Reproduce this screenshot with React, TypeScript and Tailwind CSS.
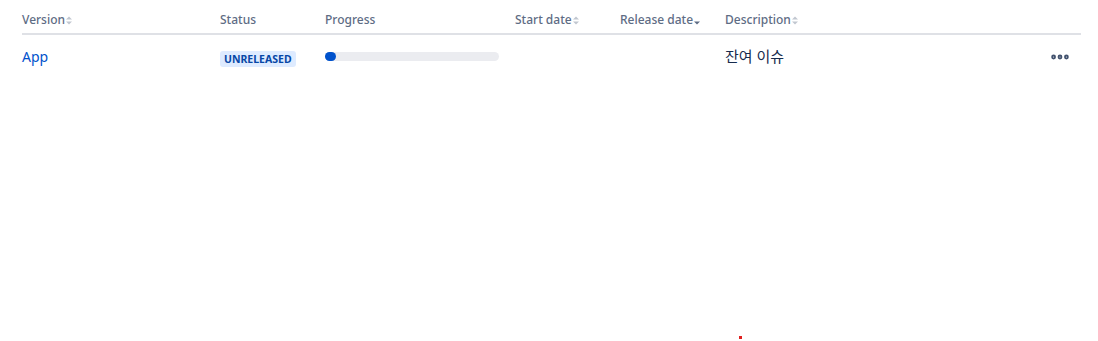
import { MoreHorizontal } from "lucide-react";

const columns = [
  { label: "Version", sort: "none" },
  { label: "Status", sort: null },
  { label: "Progress", sort: null },
  { label: "Start date", sort: "none" },
  { label: "Release date", sort: "desc" },
  { label: "Description", sort: "none" },
];

function SortIcon({ dir }: { dir: string }) {
  return (
    <svg width="6" height="9" viewBox="0 0 6 9" className="ml-[1px] mt-[1px]">
      <path d="M0 3.5 L3 0.5 L6 3.5 Z" fill={dir === "desc" ? "transparent" : "#c1c7d0"} />
      <path d="M0 5.5 L3 8.5 L6 5.5 Z" fill={dir === "desc" ? "#5e6c84" : "#c1c7d0"} />
    </svg>
  );
}

export default function App() {
  return (
    <div className="relative h-[341px] w-[1098px] bg-white font-['Noto_Sans','Noto_Sans_CJK_KR',sans-serif]">
      <div className="ml-[22px] w-[1059px] pt-[11px]">
        {/* Header */}
        <div className="grid grid-cols-[198px_105px_190px_105px_105px_1fr_40px] border-b-2 border-[#dfe1e6] pb-[4px]">
          {columns.map((col) => (
            <div
              key={col.label}
              className="flex items-center text-[12px] font-medium leading-[18px] text-[#5e6c84]"
            >
              {col.label}
              {col.sort && <SortIcon dir={col.sort} />}
            </div>
          ))}
          <div />
        </div>

        {/* Row */}
        <div className="grid h-[43px] grid-cols-[198px_105px_190px_105px_105px_1fr_40px] items-center">
          <div className="text-[14px] text-[#0052cc]">App</div>
          <div>
            <span className="inline-block rounded-[3px] bg-[#deebff] px-[4px] text-[10.5px] font-bold leading-[16px] text-[#0747a6]">
              UNRELEASED
            </span>
          </div>
          <div className="pr-[16px]">
            <div className="h-[9px] w-[174px] rounded-full bg-[#ebecf0]">
              <div className="h-[9px] w-[11px] rounded-full bg-[#0052cc]" />
            </div>
          </div>
          <div />
          <div />
          <div className="text-[15px] text-[#172b4d]">잔여 이슈</div>
          <div className="flex justify-end pr-[10px]">
            <MoreHorizontal className="h-[22px] w-[22px] text-[#42526e]" strokeWidth={3.2} />
          </div>
        </div>
      </div>

      {/* stray red dot */}
      <div className="absolute left-[739px] top-[336px] h-[3px] w-[3px] bg-[#e0201f]" />
    </div>
  );
}
